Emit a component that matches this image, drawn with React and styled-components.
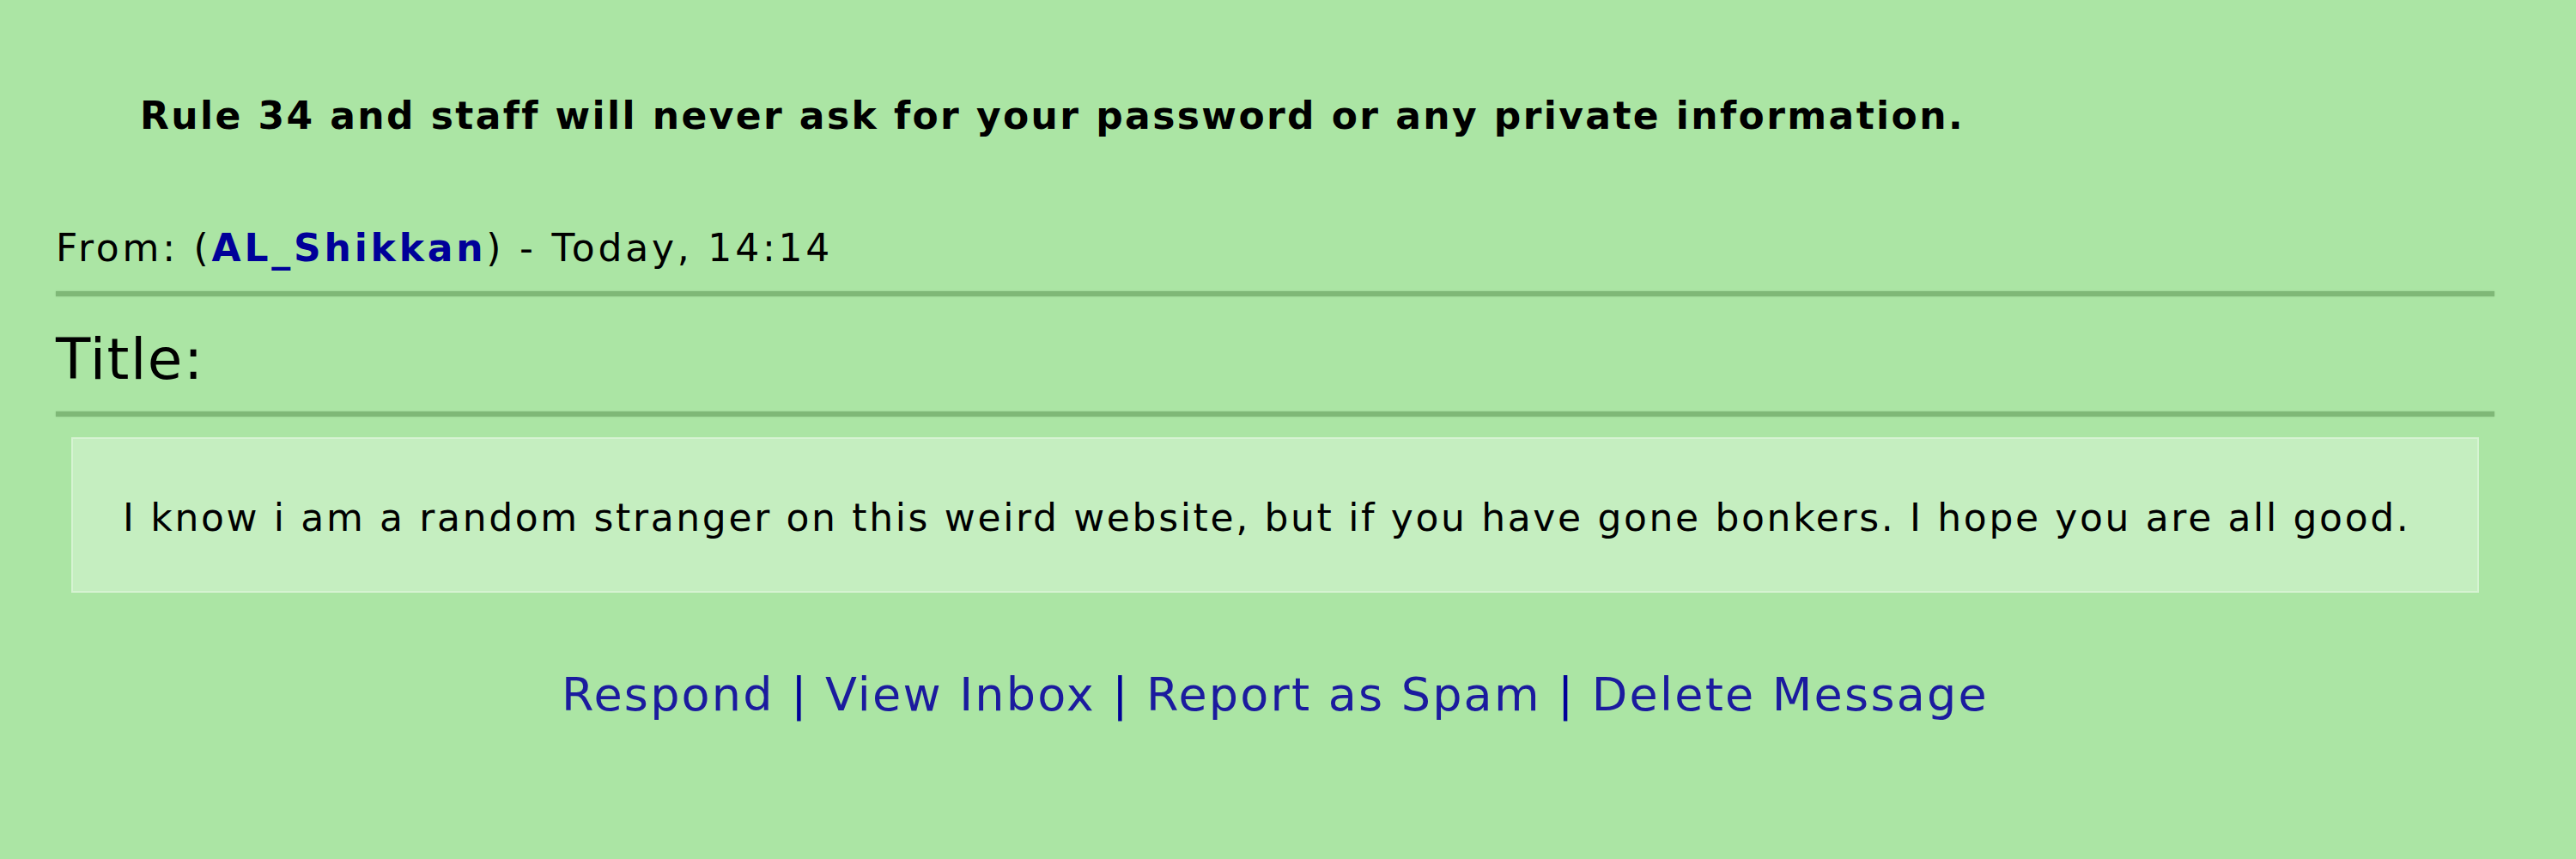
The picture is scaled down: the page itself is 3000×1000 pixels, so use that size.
import React from "react";
import styled, { createGlobalStyle } from "styled-components";

const Global = createGlobalStyle`
  html, body {
    margin: 0;
    padding: 0;
    background: #abe5a4;
  }
  body {
    font-family: "DejaVu Sans", Verdana, sans-serif;
    color: #000;
  }
`;

const Page = styled.div`
  width: 2840px;
  padding: 110px 0 160px 65px;
  display: flex;
  flex-direction: column;
`;

const Notice = styled.div`
  padding-left: 98px;
  font-size: 44px;
  line-height: 50px;
  letter-spacing: 2.4px;
  font-weight: bold;
  margin-bottom: 104px;
`;

const FromLine = styled.div`
  font-size: 44px;
  line-height: 50px;
  letter-spacing: 3.8px;
`;

const UserLink = styled.a`
  color: #000099;
  font-weight: bold;
  text-decoration: none;
`;

const Rule = styled.div`
  height: 6px;
  background: #7fb877;
  box-shadow: 0 0 2px #8cc284;
  margin: ${(p) => p.$top}px 0 ${(p) => p.$bottom}px;
`;

const Title = styled.h2`
  margin: 0;
  font-size: 66px;
  line-height: 80px;
  letter-spacing: 1.5px;
  font-weight: normal;
`;

const MessageBox = styled.div`
  margin: 0 18px;
  height: 181px;
  box-sizing: border-box;
  background: #c5eec0;
  border: 2px solid #d6f3d2;
  display: flex;
  align-items: center;
  padding: 6px 0 0 58px;
  font-size: 44px;
  line-height: 50px;
  letter-spacing: 2.65px;
`;

const Actions = styled.div`
  margin-top: 88px;
  text-align: center;
  font-size: 54px;
  line-height: 62px;
  letter-spacing: 2.2px;
  color: #000099;
`;

const ActionLink = styled.a`
  color: #1b1b9e;
  text-decoration: none;
`;

const Sep = styled.span`
  color: #000099;
`;

export default function App() {
  const actions = ["Respond", "View Inbox", "Report as Spam", "Delete Message"];
  return (
    <>
      <Global />
      <Page>
        <Notice>
          Rule 34 and staff will never ask for your password or any private information.
        </Notice>
        <FromLine>
          From: (<UserLink href="#">AL_Shikkan</UserLink>) - Today, 14:14
        </FromLine>
        <Rule $top={25} $bottom={34} />
        <Title>Title:</Title>
        <Rule $top={20} $bottom={24} />
        <MessageBox>
          I know i am a random stranger on this weird website, but if you have gone bonkers. I hope you are all good.
        </MessageBox>
        <Actions>
          {actions.map((a, i) => (
            <React.Fragment key={a}>
              {i > 0 && <Sep> | </Sep>}
              <ActionLink href="#">{a}</ActionLink>
            </React.Fragment>
          ))}
        </Actions>
      </Page>
    </>
  );
}
